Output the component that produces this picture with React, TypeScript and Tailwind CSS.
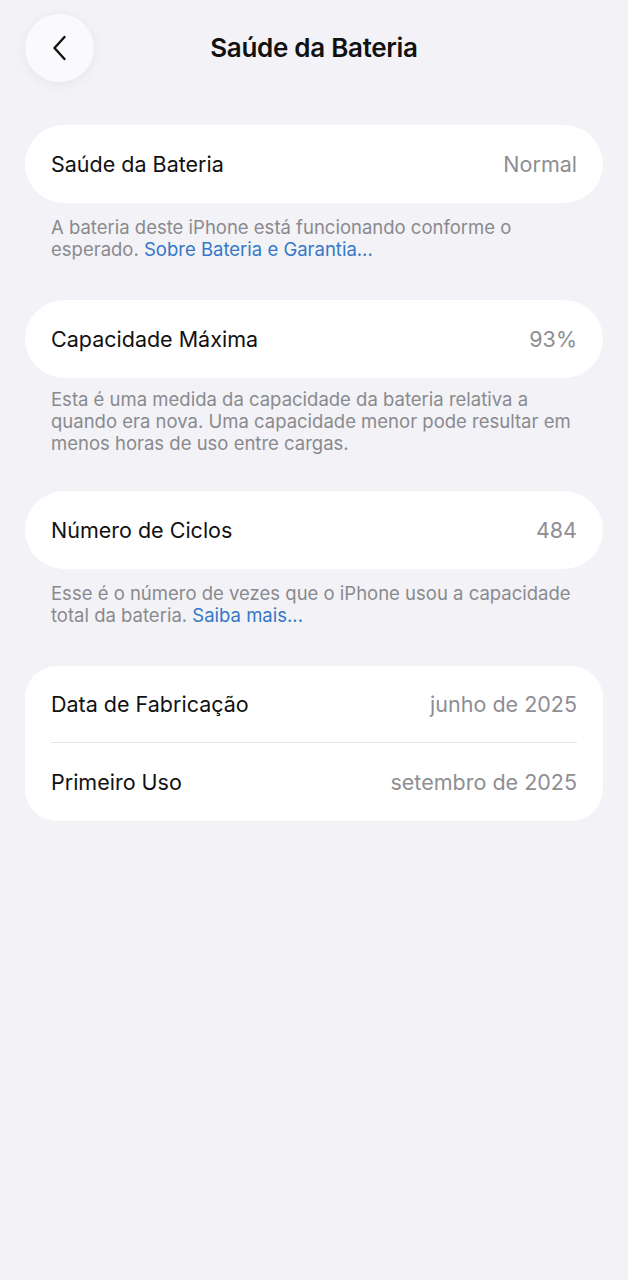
import React from "react";

interface Row {
  label: string;
  value: string;
}

function Card({ rows }: { rows: Row[] }) {
  const single = rows.length === 1;
  return (
    <div
      className={
        "mx-[25px] bg-white " + (single ? "rounded-[39px]" : "rounded-[32px]")
      }
    >
      {rows.map((r, i) => (
        <div key={r.label} className="px-[26px]">
          <div
            className={
              "flex items-center justify-between " +
              (single ? "h-[78px]" : i === 0 ? "h-[77px] border-b border-[#e6e6ea]" : "h-[78px]")
            }
          >
            <span className="text-[21.5px] text-[#111]">{r.label}</span>
            <span className="text-[21.5px] text-[#8e8e93]">{r.value}</span>
          </div>
        </div>
      ))}
    </div>
  );
}

function Footer({ children, className = "mt-[13px]" }: { children: React.ReactNode; className?: string }) {
  return (
    <p className={"mx-[51px] text-[18.5px] leading-[22px] text-[#8a8a8e] " + className}>
      {children}
    </p>
  );
}

export default function App() {
  return (
    <div
      className="min-h-[1280px] bg-[#f2f2f7] pb-10"
      style={{ fontFamily: "Inter, 'Noto Sans', sans-serif" }}
    >
      {/* Header */}
      <div className="relative flex items-center justify-center pt-[14px] h-[82px]">
        <button className="absolute left-[25px] top-[14px] w-[69px] h-[68px] rounded-full bg-[#fafafc] shadow-[0_2px_12px_rgba(0,0,0,0.06)] flex items-center justify-center">
          <svg width="16" height="26" viewBox="0 0 16 26" fill="none">
            <path
              d="M12.5 2L2.5 13L12.5 24"
              stroke="#111"
              strokeWidth="2.4"
              strokeLinecap="round"
              strokeLinejoin="round"
            />
          </svg>
        </button>
        <h1 className="text-[26px] font-semibold text-[#111] tracking-[-0.3px] -mt-[2px]">
          Saúde da Bateria
        </h1>
      </div>

      <div className="mt-[43px]">
        <Card rows={[{ label: "Saúde da Bateria", value: "Normal" }]} />
        <Footer>
          A bateria deste iPhone está funcionando conforme o esperado.{" "}
          <span className="text-[#3478c6]">Sobre Bateria e Garantia...</span>
        </Footer>
      </div>

      <div className="mt-[40px]">
        <Card rows={[{ label: "Capacidade Máxima", value: "93%" }]} />
        <Footer className="mt-[10px]">
          Esta é uma medida da capacidade da bateria relativa a quando era nova. Uma
          capacidade menor pode resultar em menos horas de uso entre cargas.
        </Footer>
      </div>

      <div className="mt-[37px]">
        <Card rows={[{ label: "Número de Ciclos", value: "484" }]} />
        <Footer>
          Esse é o número de vezes que o iPhone usou a capacidade total da bateria.{" "}
          <span className="text-[#3478c6]">Saiba mais...</span>
        </Footer>
      </div>

      <div className="mt-[40px]">
        <Card
          rows={[
            { label: "Data de Fabricação", value: "junho de 2025" },
            { label: "Primeiro Uso", value: "setembro de 2025" },
          ]}
        />
      </div>
    </div>
  );
}
